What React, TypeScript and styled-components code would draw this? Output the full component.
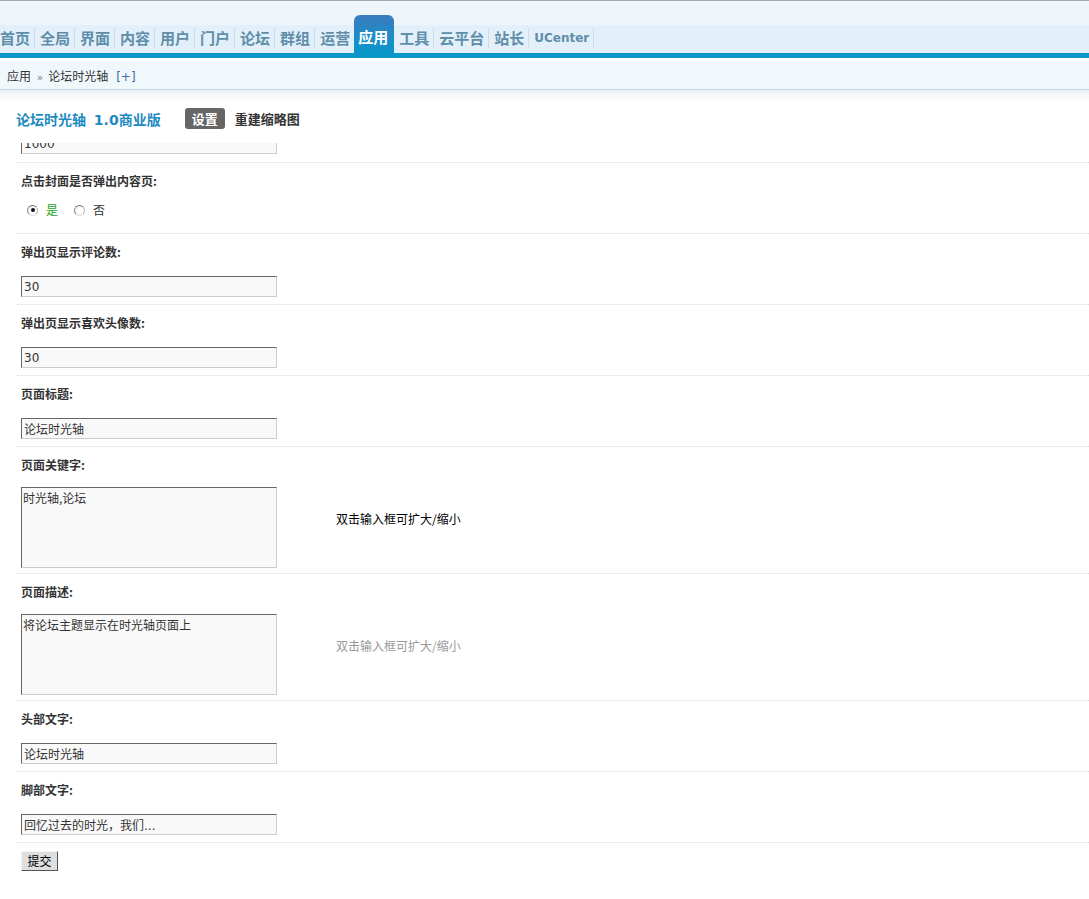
import React from 'react';
import styled, { createGlobalStyle } from 'styled-components';

const GlobalStyle = createGlobalStyle`
  html, body {
    margin: 0;
    padding: 0;
    background: #fff;
  }
  body {
    font-family: "Noto Sans CJK SC", "Noto Sans", sans-serif;
    font-size: 12px;
    color: #333;
  }
  * {
    box-sizing: border-box;
  }
`;

const Header = styled.div`
  height: 58px;
  border-top: 1px solid #a7a9ab;
  border-bottom: 5px solid #0a97c8;
  background: linear-gradient(#eef5fb 0, #eef5fb 24px, #e3f0f9 24px, #e3f0f9 100%);
`;

const Nav = styled.div`
  display: flex;
  align-items: flex-end;
  height: 52px;
  padding-left: 0;
`;

const NavItem = styled.a<{ $first?: boolean }>`
  display: block;
  height: 20px;
  line-height: 20px;
  margin-bottom: 5px;
  margin-left: ${(p) => (p.$first ? '-5px' : '0')};
  padding: 0 4px 0 5px;
  border-right: 1px solid #cddde8;
  font-size: 15px;
  font-weight: bold;
  color: #5f8eaa;
  white-space: nowrap;
  text-decoration: none;
`;

const ActiveTab = styled.a`
  display: block;
  width: 40px;
  height: 38px;
  margin-left: -1px;
  padding: 13px 0 0 4px;
  line-height: 18px;
  border-radius: 6px 6px 0 0;
  background: linear-gradient(#3b7cbf, #1790c8 70%, #0b96c8);
  font-size: 15px;
  font-weight: bold;
  color: #fff;
  white-space: nowrap;
  text-decoration: none;
`;

const UCenter = styled(NavItem)`
  font-family: "DejaVu Sans", sans-serif;
  font-size: 12px;
`;

const Breadcrumb = styled.div`
  height: 32px;
  padding: 9px 0 0 7px;
  line-height: 18px;
  border-bottom: 1px solid #c3d3df;
  background: linear-gradient(#fff 0, #fff 3px, #f1f8fc 4px, #f1f8fc 100%);
  color: #333;
  font-size: 12px;
`;

const CrumbSep = styled.span`
  margin: 0 5px 0 6px;
  color: #777;
  font-size: 10px;
  font-family: "DejaVu Sans", sans-serif;
`;

const CrumbMore = styled.span`
  margin-left: 8px;
  color: #3d6da8;
  font-family: "DejaVu Sans", sans-serif;
`;

const TitleBar = styled.div`
  display: flex;
  align-items: center;
  height: 53px;
  padding: 4px 0 0 16px;
  background: linear-gradient(#eaf2f7 0, #fff 11px);
`;

const Title = styled.h3`
  margin: 0;
  font-family: "DejaVu Sans", "Noto Sans CJK SC", sans-serif;
  font-size: 14px;
  font-weight: bold;
  color: #1e8bc0;
  white-space: nowrap;
  word-spacing: 3px;
`;

const TabButton = styled.span`
  display: inline-block;
  width: 40px;
  height: 21px;
  margin-left: 24px;
  line-height: 21px;
  text-align: center;
  border-radius: 3px;
  background: #666;
  color: #fff;
  font-size: 13px;
  font-weight: bold;
`;

const TabLink = styled.span`
  margin-left: 10px;
  font-size: 13px;
  font-weight: bold;
  color: #333;
`;

const FormList = styled.div`
  margin-left: 17px;
`;

const Row = styled.div`
  border-bottom: 1px dotted #dcdcdc;
`;

const ClipRow = styled(Row)`
  padding-bottom: 8px;
`;

const Clip = styled.div`
  display: flex;
  align-items: flex-end;
  height: 11px;
  overflow: hidden;
  padding-left: 4px;
`;

const Label = styled.div`
  height: 28px;
  padding: 9px 0 0 4px;
  line-height: 18px;
  font-size: 12px;
  font-weight: bold;
  color: #333;
`;

const Field = styled.div<{ $tall?: boolean }>`
  display: flex;
  align-items: flex-start;
  padding: ${(p) => (p.$tall ? '12px 0 5px 4px' : '14px 0 7px 4px')};
`;

const InputCell = styled.div`
  width: 315px;
  flex: none;
`;

const TextInput = styled.input`
  display: block;
  width: 256px;
  height: 21px;
  margin: 0;
  padding: 0 2px;
  border-style: solid;
  border-width: 1px;
  border-color: #666 #ccc #ccc #666;
  background: #f9f9f9;
  font-family: "DejaVu Sans", "Noto Sans CJK SC", sans-serif;
  font-size: 12px;
  color: #333;
  outline: none;
`;

const TextArea = styled.textarea`
  display: block;
  width: 256px;
  height: 81px;
  margin: 0;
  padding: 2px 1px;
  border-style: solid;
  border-width: 1px;
  border-color: #666 #ccc #ccc #666;
  background: #f9f9f9;
  font-family: "Noto Sans CJK SC", sans-serif;
  font-size: 12px;
  line-height: 16px;
  color: #333;
  resize: none;
  outline: none;
`;

const Tip = styled.div<{ $muted?: boolean }>`
  padding-top: 23px;
  line-height: 18px;
  font-size: 12px;
  color: ${(p) => (p.$muted ? '#999' : '#000')};
`;

const Radios = styled.div`
  display: flex;
  align-items: center;
  height: 42px;
  padding: 10px 0 14px 10px;
`;

const RadioOption = styled.label`
  display: inline-flex;
  align-items: center;
  margin-right: 16px;
  line-height: 18px;
`;

const RadioDot = styled.span<{ $checked?: boolean }>`
  display: inline-flex;
  align-items: center;
  justify-content: center;
  width: 11px;
  height: 11px;
  margin-right: 8px;
  border-radius: 50%;
  border: 1px solid;
  border-color: #6d6d6d #b5b5b5 #dcdcdc #8c8c8c;
  background: radial-gradient(circle at 60% 60%, #fff 40%, #e6e6e6 100%);
  &::after {
    content: '';
    display: ${(p) => (p.$checked ? 'block' : 'none')};
    width: 4px;
    height: 4px;
    border-radius: 50%;
    background: #111;
  }
`;

const RadioText = styled.span<{ $on?: boolean }>`
  color: ${(p) => (p.$on ? '#19a319' : '#333')};
  font-size: 12px;
`;

const SubmitRow = styled.div`
  padding: 8px 0 0 4px;
`;

const SubmitButton = styled.button`
  width: 37px;
  height: 20px;
  margin: 0;
  padding: 0;
  border-style: solid;
  border-width: 1px;
  border-color: #f4f4f4 #555 #555 #f4f4f4;
  background: #dedede;
  font-family: "Noto Sans CJK SC", sans-serif;
  font-size: 12px;
  line-height: 18px;
  color: #000;
`;

const navItems = ['首页', '全局', '界面', '内容', '用户', '门户', '论坛', '群组', '运营'];
const navAfter = ['工具', '云平台', '站长'];

type FieldDef = {
  label: string;
  value: string;
  multi?: boolean;
  tip?: string;
  tipMuted?: boolean;
};

const fields: FieldDef[] = [
  { label: '弹出页显示评论数:', value: '30' },
  { label: '弹出页显示喜欢头像数:', value: '30' },
  { label: '页面标题:', value: '论坛时光轴' },
  { label: '页面关键字:', value: '时光轴,论坛', multi: true, tip: '双击输入框可扩大/缩小' },
  { label: '页面描述:', value: '将论坛主题显示在时光轴页面上', multi: true, tip: '双击输入框可扩大/缩小', tipMuted: true },
  { label: '头部文字:', value: '论坛时光轴' },
  { label: '脚部文字:', value: '回忆过去的时光，我们...' },
];

const App: React.FC = () => {
  return (
    <>
      <GlobalStyle />
      <Header>
        <Nav>
          {navItems.map((item, i) => (
            <NavItem key={item} $first={i === 0}>
              {item}
            </NavItem>
          ))}
          <ActiveTab>应用</ActiveTab>
          {navAfter.map((item) => (
            <NavItem key={item}>{item}</NavItem>
          ))}
          <UCenter>UCenter</UCenter>
        </Nav>
      </Header>

      <Breadcrumb>
        应用<CrumbSep>»</CrumbSep>论坛时光轴<CrumbMore>[+]</CrumbMore>
      </Breadcrumb>

      <TitleBar>
        <Title>论坛时光轴 1.0商业版</Title>
        <TabButton>设置</TabButton>
        <TabLink>重建缩略图</TabLink>
      </TitleBar>

      <FormList>
        <ClipRow>
          <Clip>
            <TextInput defaultValue="1000" />
          </Clip>
        </ClipRow>

        <Row>
          <Label>点击封面是否弹出内容页:</Label>
          <Radios>
            <RadioOption>
              <RadioDot $checked />
              <RadioText $on>是</RadioText>
            </RadioOption>
            <RadioOption>
              <RadioDot />
              <RadioText>否</RadioText>
            </RadioOption>
          </Radios>
        </Row>

        {fields.map((f) => (
          <Row key={f.label}>
            <Label>{f.label}</Label>
            <Field $tall={f.multi}>
              <InputCell>
                {f.multi ? <TextArea defaultValue={f.value} /> : <TextInput defaultValue={f.value} />}
              </InputCell>
              {f.tip && <Tip $muted={f.tipMuted}>{f.tip}</Tip>}
            </Field>
          </Row>
        ))}

        <SubmitRow>
          <SubmitButton type="submit">提交</SubmitButton>
        </SubmitRow>
      </FormList>
    </>
  );
};

export default App;
